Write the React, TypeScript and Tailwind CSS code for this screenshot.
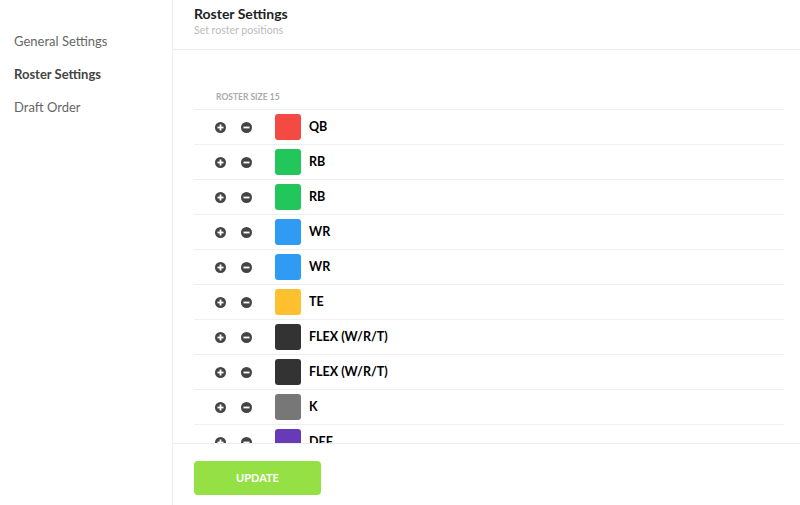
import React from 'react';

const positions = [
    { name: 'QB', color: 'bg-[#f44a44]' },
    { name: 'RB', color: 'bg-[#22c65b]' },
    { name: 'RB', color: 'bg-[#22c65b]' },
    { name: 'WR', color: 'bg-[#2f9bf2]' },
    { name: 'WR', color: 'bg-[#2f9bf2]' },
    { name: 'TE', color: 'bg-[#fdc12f]' },
    { name: 'FLEX (W/R/T)', color: 'bg-[#333333]' },
    { name: 'FLEX (W/R/T)', color: 'bg-[#333333]' },
    { name: 'K', color: 'bg-[#777777]' },
    { name: 'DEF', color: 'bg-[#673ab7]' },
    { name: 'BN', color: 'bg-[#9e9e9e]' },
];

function CircleIcon({ plus }: { plus?: boolean }) {
    return (
        <svg width="11" height="11" viewBox="0 0 11 11">
            <circle cx="5.5" cy="5.5" r="5.5" fill="#444" />
            <rect x="2.5" y="4.6" width="6" height="1.8" fill="#fff" />
            {plus && <rect x="4.6" y="2.5" width="1.8" height="6" fill="#fff" />}
        </svg>
    );
}

export default function App() {
    const nav = ['General Settings', 'Roster Settings', 'Draft Order'];

    return (
        <div className="flex h-[505px] w-[800px] overflow-hidden bg-white" style={{ fontFamily: 'Lato, "Open Sans", sans-serif' }}>
            {/* Sidebar */}
            <div className="w-[173px] shrink-0 border-r border-[#ececec] pt-[31px]">
                {nav.map((item) => (
                    <div
                        key={item}
                        className={`h-[33px] pl-[14px] text-[13px] leading-[20px] ${item === 'Roster Settings' ? 'font-bold text-[#444]' : 'text-[#666]'}`}
                    >
                        {item}
                    </div>
                ))}
            </div>

            {/* Main */}
            <div className="flex flex-1 flex-col">
                <div className="h-[50px] shrink-0 border-b border-[#ececec] pl-[21px] pt-[5px]">
                    <div className="text-[14px] font-bold leading-[18px] text-[#222]">Roster Settings</div>
                    <div className="text-[10.5px] leading-[14px] text-[#bbb]">Set roster positions</div>
                </div>

                <div className="flex-1 overflow-hidden pl-[21px] pr-[16px] pt-[41px]">
                    <div className="mb-[6px] pl-[22px] text-[8.5px] font-bold leading-[12px] text-[#aaa]">ROSTER SIZE 15</div>
                    {positions.map((p, i) => (
                        <div key={i} className="flex h-[35px] items-center border-t border-[#efefef]">
                            <div className="ml-[21px] flex w-[11px] justify-center">
                                <CircleIcon plus />
                            </div>
                            <div className="ml-[15px] flex w-[11px] justify-center">
                                <CircleIcon />
                            </div>
                            <div className={`ml-[23px] h-[26px] w-[26px] rounded-[3px] ${p.color}`} />
                            <div className="ml-[8px] text-[12.5px] font-bold text-black">{p.name}</div>
                        </div>
                    ))}
                </div>

                <div className="h-[62px] shrink-0 border-t border-[#ececec] pl-[21px] pt-[17px]">
                    <button className="h-[34px] w-[127px] rounded-[4px] bg-[#95e044] text-[11px] font-bold text-white">
                        UPDATE
                    </button>
                </div>
            </div>
        </div>
    );
}
